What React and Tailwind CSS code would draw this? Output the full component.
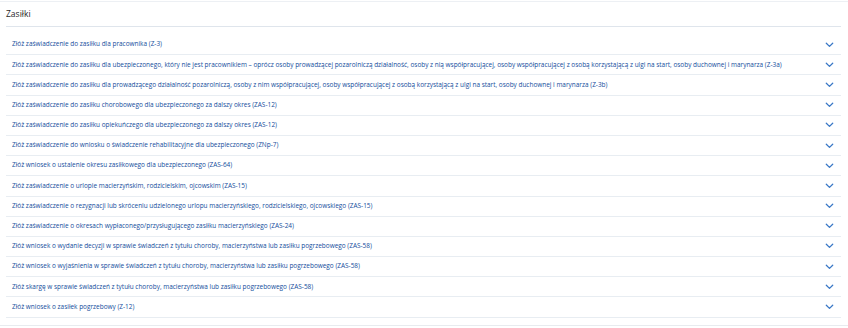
import React from "react";

const items = [
  "Złóż zaświadczenie do zasiłku dla pracownika (Z-3)",
  "Złóż zaświadczenie do zasiłku dla ubezpieczonego, który nie jest pracownikiem – oprócz osoby prowadzącej pozarolniczą działalność, osoby z nią współpracującej, osoby współpracującej z osobą korzystającą z ulgi na start, osoby duchownej i marynarza (Z-3a)",
  "Złóż zaświadczenie do zasiłku dla prowadzącego działalność pozarolniczą, osoby z nim współpracującej, osoby współpracującej z osobą korzystającą z ulgi na start, osoby duchownej i marynarza (Z-3b)",
  "Złóż zaświadczenie do zasiłku chorobowego dla ubezpieczonego za dalszy okres (ZAS-12)",
  "Złóż zaświadczenie do zasiłku opiekuńczego dla ubezpieczonego za dalszy okres (ZAS-12)",
  "Złóż zaświadczenie do wniosku o świadczenie rehabilitacyjne dla ubezpieczonego (ZNp-7)",
  "Złóż wniosek o ustalenie okresu zasiłkowego dla ubezpieczonego (ZAS-64)",
  "Złóż zaświadczenie o urlopie macierzyńskim, rodzicielskim, ojcowskim (ZAS-15)",
  "Złóż zaświadczenie o rezygnacji lub skróceniu udzielonego urlopu macierzyńskiego, rodzicielskiego, ojcowskiego (ZAS-15)",
  "Złóż zaświadczenie o okresach wypłaconego/przysługującego zasiłku macierzyńskiego (ZAS-24)",
  "Złóż wniosek o wydanie decyzji w sprawie świadczeń z tytułu choroby, macierzyństwa lub zasiłku pogrzebowego (ZAS-58)",
  "Złóż wniosek o wyjaśnienia w sprawie świadczeń z tytułu choroby, macierzyństwa lub zasiłku pogrzebowego (ZAS-58)",
  "Złóż skargę w sprawie świadczeń z tytułu choroby, macierzyństwa lub zasiłku pogrzebowego (ZAS-58)",
  "Złóż wniosek o zasiłek pogrzebowy (Z-12)",
];

function Chevron() {
  return (
    <svg width="9" height="6" viewBox="0 0 9 6" className="shrink-0">
      <path d="M1.3 1.3 L4.5 4.4 L7.7 1.3" fill="none" stroke="#3a78c6" strokeWidth="1.3" strokeLinecap="round" strokeLinejoin="round" />
    </svg>
  );
}

export default function App() {
  return (
    <div
      className="w-[848px] h-[328px] bg-white flex flex-col"
      style={{ fontFamily: '"Open Sans", "Noto Sans", sans-serif' }}
    >
      <div className="h-[1px] mt-[1px] bg-[#edf0f4]" />
      <div className="pl-[6px] pr-[7px]">
        <div className="h-[25px] flex items-center border-b border-[#dfe5ec] text-[8.5px] text-[#1f1f1f]">
          Zasiłki
        </div>
        <div className="mt-[8px] flex flex-col">
          {items.map((t) => (
            <div
              key={t}
              className="h-[20.2px] flex items-center justify-between border-b border-[#e8edf2] pl-[6px] pr-[7px]"
            >
              <span className="text-[6.45px] text-[#134d9c] whitespace-nowrap leading-none">{t}</span>
              <Chevron />
            </div>
          ))}
        </div>
      </div>
      <div className="h-[1px] mt-[7px] bg-[#e8ebef]" />
    </div>
  );
}
